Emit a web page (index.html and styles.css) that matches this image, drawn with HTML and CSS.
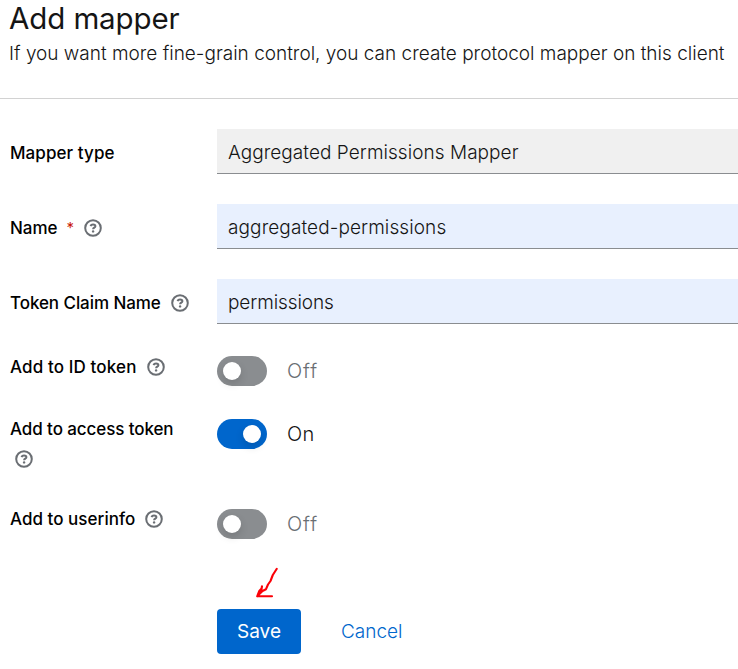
FILE: index.html
```html
<!DOCTYPE html>
<html lang="en">
<head>
<meta charset="utf-8">
<title>Add mapper</title>
<link rel="stylesheet" href="styles.css">
</head>
<body>
<svg class="defs" width="0" height="0">
  <symbol id="help" viewBox="0 0 18 18">
    <circle cx="9" cy="9" r="7.8" fill="none" stroke="currentColor" stroke-width="2"/>
    <path d="M6.5 7.1C6.9 5.9 7.8 5.4 9 5.4c1.4 0 2.4.7 2.4 1.8 0 1.5-2.3 1.5-2.3 3" fill="none" stroke="currentColor" stroke-width="2"/>
    <circle cx="9.1" cy="12.4" r="1.2" fill="currentColor"/>
  </symbol>
</svg>
<header class="header">
  <h1 class="title">Add mapper</h1>
  <p class="subtitle">If you want more fine-grain control, you can create protocol mapper on this client</p>
</header>
<main class="form">
  <div class="row row-input">
    <div class="label"><span class="l-type">Mapper type</span></div>
    <div class="input readonly"><span class="v-type">Aggregated Permissions Mapper</span></div>
  </div>
  <div class="row row-input">
    <div class="label"><span>Name</span><span class="required">*</span><svg class="help"><use href="#help"/></svg></div>
    <div class="input"><span class="v-name">aggregated-permissions</span></div>
  </div>
  <div class="row row-input">
    <div class="label"><span class="l-claim">Token Claim Name</span><svg class="help"><use href="#help"/></svg></div>
    <div class="input"><span class="v-claim">permissions</span></div>
  </div>
  <div class="row row-switch">
    <div class="label"><span class="l-id">Add to ID token</span><svg class="help"><use href="#help"/></svg></div>
    <div class="control"><span class="switch"></span><span class="state">Off</span></div>
  </div>
  <div class="row row-switch row-tall">
    <div class="label"><span class="l-access">Add to access token</span><svg class="help help-wrapped"><use href="#help"/></svg></div>
    <div class="control"><span class="switch on"></span><span class="state state-on">On</span></div>
  </div>
  <div class="row row-switch row-last">
    <div class="label"><span class="l-user">Add to userinfo</span><svg class="help"><use href="#help"/></svg></div>
    <div class="control"><span class="switch"></span><span class="state">Off</span></div>
  </div>
  <div class="actions">
    <button class="save">Save</button>
    <button class="cancel">Cancel</button>
    <svg class="arrow" viewBox="0 0 26 34" fill="none" stroke="#fb0007" stroke-width="2.1" stroke-linecap="round" stroke-linejoin="round"><path d="M22.8 2.8L18.8 9 16.5 15 14 18.5 12 23.2 8.5 25 3.2 30.3M8 20.3L7.6 22.5 5.3 25 3.2 30.3H18M7.5 22.5L7.3 26"/></svg>
  </div>
</main>
</body>
</html>
```
FILE: styles.css
```css
* { box-sizing: border-box; }
body {
  margin: 0;
  width: 738px;
  height: 669px;
  overflow: hidden;
  background: #fff;
  color: #151515;
  font-family: Inter, "Open Sans", sans-serif;
  font-size: 19px;
  font-weight: 300;
}
.defs { position: absolute; }
.header {
  height: 99px;
  padding-left: 9px;
  border-bottom: 1px solid #d2d2d2;
  white-space: nowrap;
}
.title { margin: 0; font-size: 29.5px; font-weight: 400; line-height: 36px; height: 38px; letter-spacing: -0.1px; }
.subtitle { margin: 0; line-height: 32px; }
.form { padding: 30px 0 0 10px; }
.row { display: grid; grid-template-columns: 207px 1fr; }
.row-input { height: 75px; }
.row-input .label { padding-top: 9px; }
.row-switch { height: 63px; margin-top: 2px; }
.row-switch + .row-switch { margin-top: 0; }
.row-switch .label { margin-top: -4px; }
.row-tall { height: 90px; }
.row-tall .label, .row-last .label { margin-top: -5px; }
.row-last { height: 100px; }
.label {
  display: flex;
  flex-wrap: wrap;
  align-content: flex-start;
  align-items: center;
  color: #000;
  font-size: 17px;
  font-weight: 500;
  line-height: 30px;
}
.l-type { letter-spacing: 0.08px; }
.l-claim { letter-spacing: -0.07px; }
.l-id { letter-spacing: 0.13px; }
.l-access { letter-spacing: -0.09px; }
.l-user { letter-spacing: 0.03px; }
.required { margin-left: 9px; color: #c9190b; font-size: 15px; font-weight: 400; }
.help { width: 18px; height: 18px; margin-left: 10px; color: #6a6e73; }
.help-wrapped { margin: 6px 160px 0 5px; }
.input {
  height: 45px;
  padding-left: 11px;
  background: #e8f0fe;
  border-bottom: 1px solid #8a8d90;
  line-height: 48px;
  white-space: nowrap;
}
.readonly { background: #f0f0f0; }
.v-type { letter-spacing: 0.05px; }
.v-name { letter-spacing: 0.1px; }
.v-claim { letter-spacing: -0.1px; }
.control { display: flex; align-items: center; height: 30px; }
.switch {
  width: 50px;
  height: 30px;
  padding: 6px;
  border-radius: 15px;
  background: #8a8d90;
}
.switch::before {
  content: "";
  display: block;
  width: 18px;
  height: 18px;
  border-radius: 50%;
  background: #fff;
  box-shadow: 0 4px 8px rgba(0, 0, 0, .14);
}
.switch.on { background: #06c; }
.switch.on::before { margin-left: 20px; }
.state { margin-left: 20px; color: #6a6e73; font-size: 20px; letter-spacing: 0.9px; }
.state-on { color: #151515; letter-spacing: 0.3px; }
.actions { position: relative; display: flex; padding-left: 207px; }
.save, .cancel {
  height: 45px;
  padding: 0;
  border: 0;
  background: none;
  color: #06c;
  font: inherit;
}
.save { width: 84px; border-radius: 4px; background: #06c; color: #fff; font-weight: 400; }
.cancel { margin-left: 40px; }
.arrow { position: absolute; left: 244px; top: -43px; width: 26px; height: 34px; }
```
